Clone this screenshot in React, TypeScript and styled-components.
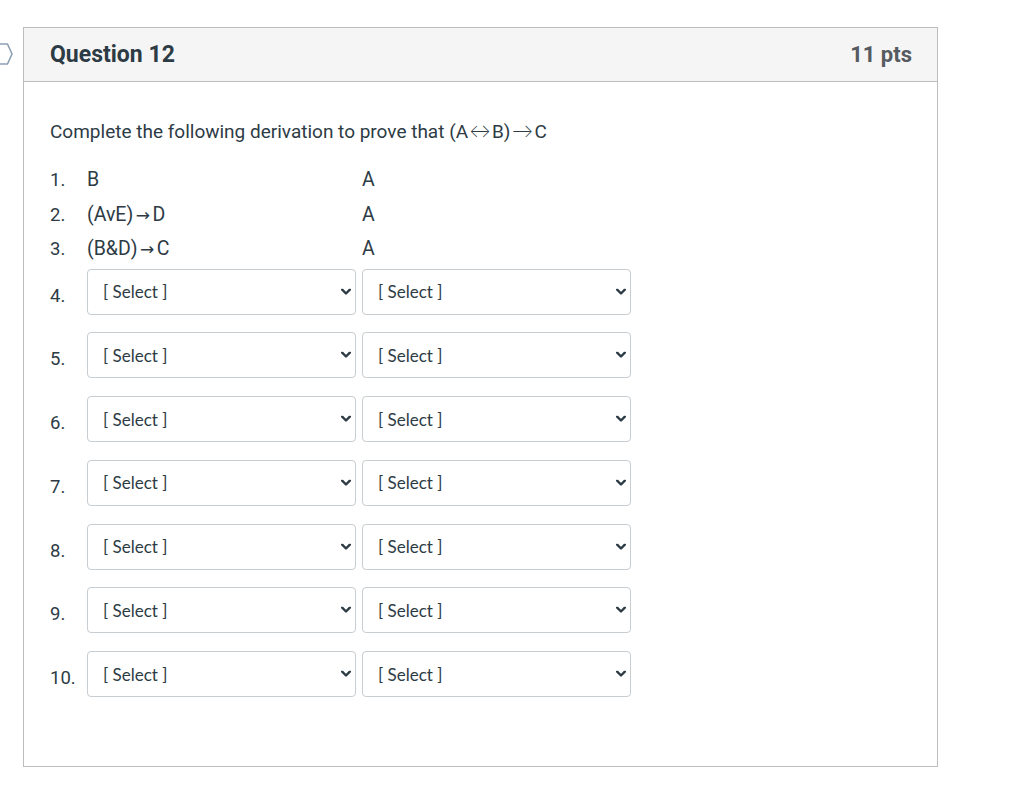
import React from "react";
import styled, { createGlobalStyle } from "styled-components";

const Global = createGlobalStyle`
  html, body { margin: 0; padding: 0; background: #fff; }
  body { font-family: Roboto, "Liberation Sans", sans-serif; color: #2d3b45; }
`;

const Page = styled.div`
  position: relative;
  width: 1024px;
  height: 797px;
  box-sizing: border-box;
  padding: 27px 0 0 23px;
`;

const FlagIcon = styled.svg`
  position: absolute;
  left: 0;
  top: 43px;
`;

const Panel = styled.section`
  width: 915px;
  box-sizing: border-box;
  border: 1px solid #bdbdbd;
  background: #fff;
`;

const Header = styled.header`
  display: flex;
  align-items: center;
  justify-content: space-between;
  height: 54px;
  box-sizing: border-box;
  padding: 0 25px 0 26px;
  background: #f5f5f5;
  border-bottom: 1px solid #bdbdbd;
`;

const Title = styled.h2`
  margin: 0;
  font-size: 23px;
  font-weight: 700;
  color: #2d3b45;
`;

const Points = styled.span`
  font-size: 22px;
  font-weight: 700;
  color: #555b60;
`;

const Body = styled.div`
  padding: 36px 26px 69px 26px;
`;

const Intro = styled.p`
  margin: 0 0 18px 0;
  font-size: 19px;
  line-height: 27px;
  height: 27px;
`;

const ThinArrow = styled.span`
  font-family: Lato, "Liberation Sans", sans-serif;
  font-size: 21px;
  font-weight: 300;
  line-height: 0;
  margin: 0 1.5px;
`;

const BoldArrow = styled.span`
  font-family: "DejaVu Sans", sans-serif;
  font-size: 17px;
  line-height: 0;
  margin: 0 2.5px;
`;

const Lines = styled.div`
  display: grid;
  grid-template-columns: 31px 269px 269px;
  grid-auto-rows: 34.5px;
  column-gap: 6px;
  font-size: 19.5px;
  line-height: 34.5px;
`;

const Num = styled.span<{ $select?: boolean }>`
  font-size: 18.5px;
  line-height: ${(p) => (p.$select ? "27px" : "34.5px")};
  padding-top: ${(p) => (p.$select ? "14px" : "0")};
  align-self: start;
  white-space: nowrap;
`;

const Cell = styled.span`
  white-space: nowrap;
`;

const SelectRows = styled.div`
  display: grid;
  grid-template-columns: 31px 269px 269px;
  grid-auto-rows: 46px;
  column-gap: 6px;
  row-gap: 17.8px;
  margin-top: 2px;
`;

const SelectWrap = styled.div`
  position: relative;
  height: 46px;
`;

const Select = styled.select`
  appearance: none;
  -webkit-appearance: none;
  width: 100%;
  height: 46px;
  box-sizing: border-box;
  border: 1px solid #c7cdd1;
  border-radius: 4px;
  background: #fff;
  padding: 0 28px 0 15px;
  font-family: Lato, "Liberation Sans", sans-serif;
  font-size: 17px;
  color: #2d3b45;
  outline: none;
`;

const Chevron = styled.svg`
  position: absolute;
  right: 5px;
  top: 50%;
  transform: translateY(-50%);
  pointer-events: none;
`;

const Dropdown = () => (
  <SelectWrap>
    <Select defaultValue="">
      <option value="">[ Select ]</option>
    </Select>
    <Chevron width="10" height="7" viewBox="0 0 10 7">
      <path d="M1.2 1.2 L5 5 L8.8 1.2" fill="none" stroke="#2d3b45" strokeWidth="2.4" strokeLinecap="round" strokeLinejoin="round" />
    </Chevron>
  </SelectWrap>
);

const given: { n: string; a: string; b: string | null }[] = [
  { n: "1.", a: "B", b: null },
  { n: "2.", a: "(AvE)", b: "D" },
  { n: "3.", a: "(B&D)", b: "C" },
];

export default function App() {
  return (
    <>
      <Global />
      <Page>
        <FlagIcon width="14" height="22" viewBox="0 0 14 22">
          <path d="M-4 1 H7.5 L12 11 L7.5 21 H-4" fill="none" stroke="#8c9fb2" strokeWidth="1.6" strokeLinejoin="round" />
        </FlagIcon>
        <Panel>
          <Header>
            <Title>Question 12</Title>
            <Points>11 pts</Points>
          </Header>
          <Body>
            <Intro>
              Complete the following derivation to prove that (A<ThinArrow>↔</ThinArrow>B)<ThinArrow>→</ThinArrow>C
            </Intro>
            <Lines>
              {given.map((g) => (
                <React.Fragment key={g.n}>
                  <Num>{g.n}</Num>
                  <Cell>
                    {g.a}
                    {g.b && (
                      <>
                        <BoldArrow>→</BoldArrow>
                        {g.b}
                      </>
                    )}
                  </Cell>
                  <Cell>A</Cell>
                </React.Fragment>
              ))}
            </Lines>
            <SelectRows>
              {[4, 5, 6, 7, 8, 9, 10].map((n) => (
                <React.Fragment key={n}>
                  <Num $select>{n}.</Num>
                  <Dropdown />
                  <Dropdown />
                </React.Fragment>
              ))}
            </SelectRows>
          </Body>
        </Panel>
      </Page>
    </>
  );
}
